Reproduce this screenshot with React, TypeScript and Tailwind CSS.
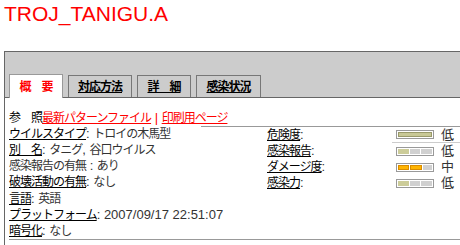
import React from "react";

const jp = "font-['Liberation_Sans','Noto_Sans_CJK_JP',sans-serif]";

function L({ children }: { children: React.ReactNode }) {
  return <span className="text-[13px] tracking-normal">{children}</span>;
}

function Bar({ segs }: { segs: string[] | null }) {
  return (
    <div className="w-[38px] h-[9px] border border-[#999] p-px bg-white flex gap-px">
      {segs === null ? (
        <div className="flex-1 bg-[#c8c896] border border-[#99996a]" />
      ) : (
        segs.map((c, i) => (
          <div
            key={i}
            className={
              "flex-1 " +
              (c === "o"
                ? "bg-[#cccc99]"
                : c === "y"
                ? "bg-[#ffb400] border border-[#d98c00]"
                : "bg-[#d0d0d0]")
            }
          />
        ))
      )}
    </div>
  );
}

export default function App() {
  const tabs = [
    { t: "対応方法", w: "w-[64px]" },
    { t: "詳　細", w: "w-[54px]" },
    { t: "感染状況", w: "w-[65px]" },
  ];
  const right = [
    { l: "危険度", segs: null, v: "低" },
    { l: "感染報告", segs: ["o", "g", "g"], v: "低" },
    { l: "ダメージ度", segs: ["y", "y", "g"], v: "中" },
    { l: "感染力", segs: ["o", "g", "g"], v: "低" },
  ];
  return (
    <div className={`${jp} w-[460px] h-[245px] overflow-hidden bg-white`}>
      <div className="h-[51px] pl-[4px] pt-[2px] text-[21px] leading-[24px] text-[#ff0000] font-['Liberation_Sans',sans-serif]">
        TROJ_TANIGU.A
      </div>
      <div className="ml-[4px] border-l border-[#666]">
        <div className="h-[47px] bg-[#cccccc] border-t border-b border-[#666] flex items-end pl-[4px] gap-[5px]">
          <div className="w-[54px] h-[24px] -mb-px bg-white border-t border-l border-r border-[#999] flex items-center justify-center text-[12px] tracking-[-1px] font-bold text-[#ff0000]">
            概　要
          </div>
          {tabs.map((t) => (
            <div
              key={t.t}
              className={`${t.w} h-[22px] border-t border-l border-r border-[#777] flex items-center justify-center text-[12px] tracking-[-1px] font-bold text-black underline`}
            >
              {t.t}
            </div>
          ))}
        </div>
        <div className="pt-[12px] text-[12px] tracking-[-1px] leading-[16px] text-[#333]">
          <div className="h-[16px] pl-[4px] flex items-center whitespace-pre">
            <span className="text-black">参　照</span>
            <span className="text-[#ff0000] underline">最新パターンファイル</span>
            <span className="text-[#ff0000] text-[13px] tracking-normal"> | </span>
            <span className="text-[#ff0000] underline">印刷用ページ</span>
          </div>
          <div className="flex">
            <div className="w-[196px] shrink-0 pl-[4px] whitespace-pre">
              <div className="h-[16px] flex items-center">
                <span className="text-black underline">ウイルスタイプ</span>
                <L>: </L>トロイの木馬型
              </div>
              <div className="h-[16px] flex items-center">
                <span className="text-black underline">別　名</span>
                <L>: </L>タニグ<L>, </L>谷口ウイルス
              </div>
              <div className="h-[16px] flex items-center">
                感染報告の有無<L> : </L>あり
              </div>
              <div className="h-[16px] flex items-center">
                <span className="text-black underline">破壊活動の有無</span>
                <L>: </L>なし
              </div>
            </div>
            <div className="flex-1 border-t border-[#999]">
              {right.map((r, i) => (
                <div key={r.l} className="flex h-[16px]">
                  <div className="w-[191px] pl-[66px] flex items-center">
                    <span className="text-black underline">{r.l}</span>
                    <L>:</L>
                  </div>
                  <div
                    className={
                      "flex-1 flex items-center pl-[4px] gap-[7px] " +
                      (i === 0 ? "border-b border-[#ccc]" : "")
                    }
                  >
                    <Bar segs={r.segs} />
                    <span className="text-[13px] tracking-normal text-[#333]">{r.v}</span>
                  </div>
                </div>
              ))}
            </div>
          </div>
          <div className="pl-[4px] whitespace-pre">
            <div className="h-[16px] flex items-center">
              <span className="text-black underline">言語</span>
              <L>: </L>英語
            </div>
            <div className="h-[16px] flex items-center">
              <span className="text-black underline">プラットフォーム</span>
              <L>: 2007/09/17 22:51:07</L>
            </div>
            <div className="h-[16px] flex items-center">
              <span className="text-black underline">暗号化</span>
              <L>: </L>なし
            </div>
          </div>
          <div className="ml-[4px] border-t border-[#999] h-[10px]" />
        </div>
      </div>
    </div>
  );
}
